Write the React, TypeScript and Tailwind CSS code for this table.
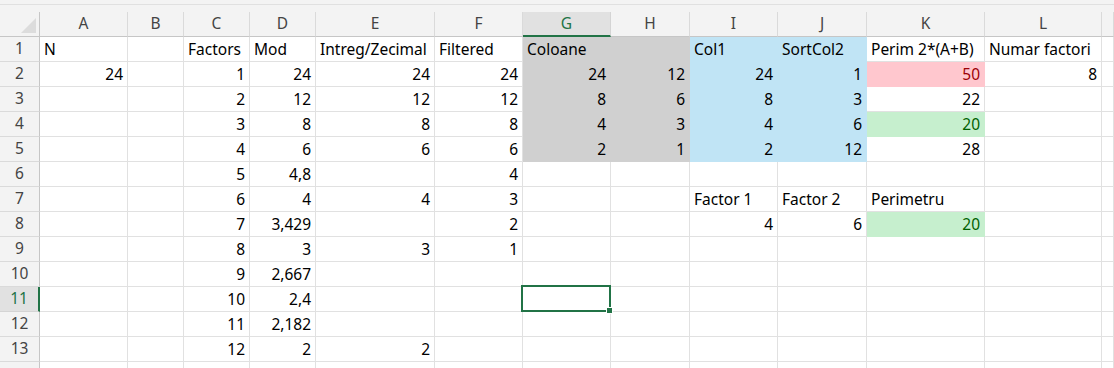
import React from 'react';

type Cell = { v?: string; align?: 'l' | 'r'; fill?: string };

const COLS = ['A', 'B', 'C', 'D', 'E', 'F', 'G', 'H', 'I', 'J', 'K', 'L', 'M'];
const WIDTHS = [88, 56, 66, 66, 119, 88, 88, 79, 88, 89, 118, 117, 12];

const GRAY = 'gray';
const BLUE = 'blue';
const PINK = 'pink';
const GREEN = 'green';

// fill -> classes (bg + gridline colour so fills hide the grid)
const fillClass: Record<string, string> = {
  none: 'bg-white border-[#e1e1e1] text-black',
  gray: 'bg-[#d0d0d0] border-[#d0d0d0] text-black',
  blue: 'bg-[#c0e4f5] border-[#c0e4f5] text-black',
  pink: 'bg-[#ffc7ce] border-[#ffc7ce] text-[#9c0006]',
  green: 'bg-[#c6efce] border-[#c6efce] text-[#006100]',
};

const L = (v: string, fill?: string): Cell => ({ v, align: 'l', fill });
const R = (v: string | number, fill?: string): Cell => ({ v: String(v), align: 'r', fill });
const F = (fill: string): Cell => ({ fill });

// sheet contents, keyed by column letter
const rows: Record<string, Cell>[] = [
  { A: L('N'), C: L('Factors'), D: L('Mod'), E: L('Intreg/Zecimal'), F: L('Filtered'), G: L('Coloane', GRAY), H: F(GRAY), I: L('Col1', BLUE), J: L('SortCol2', BLUE), K: L('Perim 2*(A+B)'), L: L('Numar factori') },
  { A: R(24), C: R(1), D: R(24), E: R(24), F: R(24), G: R(24, GRAY), H: R(12, GRAY), I: R(24, BLUE), J: R(1, BLUE), K: R(50, PINK), L: R(8) },
  { C: R(2), D: R(12), E: R(12), F: R(12), G: R(8, GRAY), H: R(6, GRAY), I: R(8, BLUE), J: R(3, BLUE), K: R(22) },
  { C: R(3), D: R(8), E: R(8), F: R(8), G: R(4, GRAY), H: R(3, GRAY), I: R(4, BLUE), J: R(6, BLUE), K: R(20, GREEN) },
  { C: R(4), D: R(6), E: R(6), F: R(6), G: R(2, GRAY), H: R(1, GRAY), I: R(2, BLUE), J: R(12, BLUE), K: R(28) },
  { C: R(5), D: R('4,8'), F: R(4) },
  { C: R(6), D: R(4), E: R(4), F: R(3), I: L('Factor 1'), J: L('Factor 2'), K: L('Perimetru') },
  { C: R(7), D: R('3,429'), F: R(2), I: R(4), J: R(6), K: R(20, GREEN) },
  { C: R(8), D: R(3), E: R(3), F: R(1) },
  { C: R(9), D: R('2,667') },
  { C: R(10), D: R('2,4') },
  { C: R(11), D: R('2,182') },
  { C: R(12), D: R(2), E: R(2) },
];

const ACTIVE_ROW = 11;
const ACTIVE_COL = 'G';

function ColumnHeaders() {
  return (
    <div className="flex h-[25px]">
      <div className="w-[40px] h-[25px] shrink-0 border-r border-b border-[#c6c6c6] bg-[#f3f3f3] relative">
        <svg width="40" height="25" className="absolute inset-0">
          <polygon points="36,6 36,21 21,21" fill="#dcdcdc" />
        </svg>
      </div>
      {COLS.map((c, i) => {
        const active = c === ACTIVE_COL;
        return (
          <div
            key={c}
            style={{ width: WIDTHS[i] }}
            className={
              'h-[25px] shrink-0 border-r flex items-center justify-center overflow-hidden ' +
              (active
                ? 'bg-[#e1e1e1] border-[#d4d4d4] border-b-2 border-b-[#217346] text-[#217346]'
                : 'bg-[#f3f3f3] border-[#dadada] border-b border-b-[#c6c6c6] text-[#444]')
            }
          >
            {c === 'M' ? '' : c}
          </div>
        );
      })}
    </div>
  );
}

function SheetRow({ n, cells, label = true }: { n: number; cells: Record<string, Cell>; label?: boolean }) {
  const activeRow = n === ACTIVE_ROW;
  return (
    <div className="flex h-[25px]">
      <div
        className={
          'w-[40px] h-[25px] shrink-0 border-b flex items-center justify-center ' +
          (activeRow
            ? 'bg-[#e1e1e1] border-b-[#d4d4d4] border-r-2 border-r-[#217346] text-[#217346]'
            : 'bg-[#f3f3f3] border-b-[#dadada] border-r border-r-[#c6c6c6] text-[#444]')
        }
      >
        {label ? n : ''}
      </div>
      {COLS.map((c, i) => {
        const cell = cells[c] || {};
        const selected = activeRow && c === ACTIVE_COL;
        return (
          <div
            key={c}
            style={{ width: WIDTHS[i] }}
            className={
              'h-[25px] shrink-0 border-r border-b flex items-center px-[4px] whitespace-nowrap relative ' +
              fillClass[cell.fill || 'none'] +
              (cell.align === 'r' ? ' justify-end' : ' justify-start')
            }
          >
            <span className="pt-[2px]">{cell.v}</span>
            {selected && (
              <div className="absolute z-10 left-[-2px] top-[-2px] right-[-1px] bottom-[-1px] border-2 border-[#217346]">
                <div className="absolute right-[-4px] bottom-[-4px] w-[7px] h-[7px] bg-[#217346] border border-white" />
              </div>
            )}
          </div>
        );
      })}
    </div>
  );
}

export default function App() {
  return (
    <div
      className="w-[1114px] h-[368px] overflow-hidden bg-white text-[15.5px] leading-none"
      style={{ fontFamily: '"Noto Sans", Inter, sans-serif' }}
    >
      {/* strip under the formula bar */}
      <div className="h-[12px] bg-[#f3f3f3] pt-[4px]">
        <div className="h-px bg-[#e0e0e0]" />
      </div>
      <ColumnHeaders />
      {rows.map((r, i) => (
        <SheetRow key={i} n={i + 1} cells={r} />
      ))}
      {/* partly visible row below the data */}
      <SheetRow n={14} cells={{}} label={false} />
    </div>
  );
}
